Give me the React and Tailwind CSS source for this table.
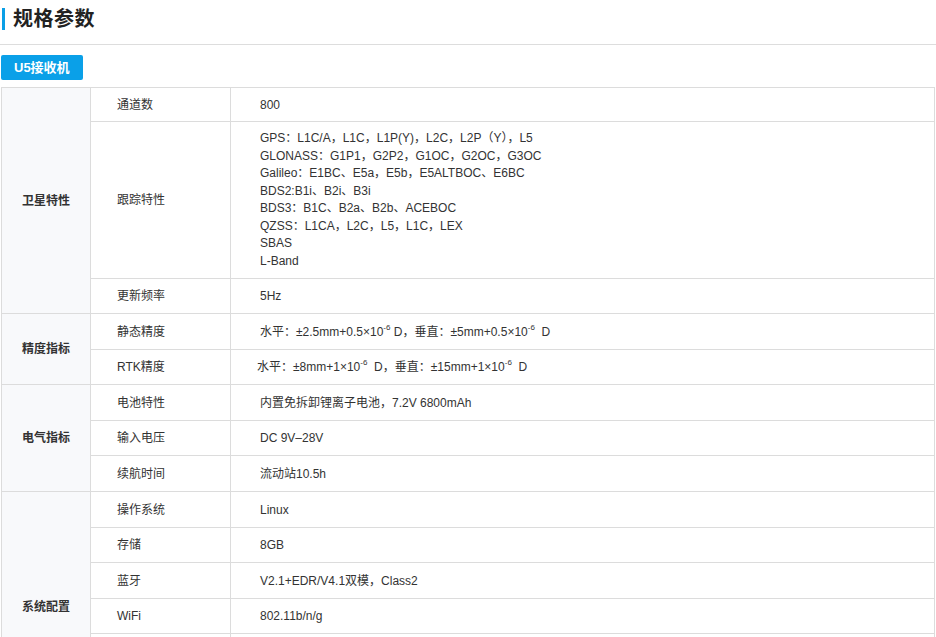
import React from "react";

const font = { fontFamily: '"Liberation Sans", "Noto Sans CJK SC", sans-serif' };

function Sup({ children }) {
  return <sup className="text-[8px] relative -top-[1px] align-super leading-none">{children}</sup>;
}

const td2 = "border border-[#dcdcdc] pl-[26px] pr-2 text-left align-middle";
const td3 = "border border-[#dcdcdc] pl-[29px] pr-2 text-left align-middle";
const tdCat = "border border-[#dcdcdc] bg-[#f8f9fb] text-center align-middle font-bold";

export default function App() {
  const tracking = [
    "GPS：L1C/A，L1C，L1P(Y)，L2C，L2P（Y），L5",
    "GLONASS：G1P1，G2P2，G1OC，G2OC，G3OC",
    "Galileo：E1BC、E5a，E5b，E5ALTBOC、E6BC",
    "BDS2:B1i、B2i、B3i",
    "BDS3：B1C、B2a、B2b、ACEBOC",
    "QZSS：L1CA，L2C，L5，L1C，LEX",
    "SBAS",
    "L-Band",
  ];
  return (
    <div className="w-[936px] h-[637px] bg-white text-[#333] overflow-hidden" style={font}>
      <div className="flex items-center h-[45px] pb-[6px] border-b border-[#dddddd]">
        <div className="w-[3px] h-[22px] bg-[#0a9fe6] ml-[2px] mr-[8px]" />
        <h1 className="text-[20px] font-bold text-[#222] leading-none tracking-[0.5px]">规格参数</h1>
      </div>
      <div className="pt-[10px]">
        <span className="inline-flex items-center h-[25px] px-[13px] ml-px bg-[#0aa0e8] text-white text-[13px] font-bold rounded-[2px]">
          U5接收机
        </span>
      </div>
      <div className="pt-[7px] pl-px">
        <table className="w-[934px] table-fixed border-collapse text-[12px]">
          <colgroup>
            <col className="w-[89px]" />
            <col className="w-[140px]" />
            <col />
          </colgroup>
          <tbody>
            <tr className="h-[34px]">
              <td rowSpan={3} className={tdCat}>卫星特性</td>
              <td className={td2}>通道数</td>
              <td className={td3}>800</td>
            </tr>
            <tr className="h-[157px]">
              <td className={td2}>跟踪特性</td>
              <td className={td3 + " leading-[17.5px]"}>
                {tracking.map((t) => (
                  <div key={t}>{t}</div>
                ))}
              </td>
            </tr>
            <tr className="h-[35px]">
              <td className={td2}>更新频率</td>
              <td className={td3}>5Hz</td>
            </tr>
            <tr className="h-[36px]">
              <td rowSpan={2} className={tdCat}>精度指标</td>
              <td className={td2}>静态精度</td>
              <td className={td3}>
                水平：±2.5mm+0.5×10<Sup>-6</Sup> D，垂直：±5mm+0.5×10<Sup>-6</Sup>&nbsp; D
              </td>
            </tr>
            <tr className="h-[35px]">
              <td className={td2}>RTK精度</td>
              <td className={"border border-[#dcdcdc] pl-[26px] pr-2 text-left align-middle"}>
                水平：±8mm+1×10<Sup>-6</Sup>&nbsp; D，垂直：±15mm+1×10<Sup>-6</Sup>&nbsp; D
              </td>
            </tr>
            <tr className="h-[36px]">
              <td rowSpan={3} className={tdCat}>电气指标</td>
              <td className={td2}>电池特性</td>
              <td className={td3}>内置免拆卸锂离子电池，7.2V 6800mAh</td>
            </tr>
            <tr className="h-[35px]">
              <td className={td2}>输入电压</td>
              <td className={td3}>DC 9V–28V</td>
            </tr>
            <tr className="h-[36px]">
              <td className={td2}>续航时间</td>
              <td className={td3}>流动站10.5h</td>
            </tr>
            <tr className="h-[36px]">
              <td rowSpan={6} className={tdCat}>系统配置</td>
              <td className={td2}>操作系统</td>
              <td className={td3}>Linux</td>
            </tr>
            <tr className="h-[35px]">
              <td className={td2}>存储</td>
              <td className={td3}>8GB</td>
            </tr>
            <tr className="h-[36px]">
              <td className={td2}>蓝牙</td>
              <td className={td3}>V2.1+EDR/V4.1双模，Class2</td>
            </tr>
            <tr className="h-[35px]">
              <td className={td2}>WiFi</td>
              <td className={td3}>802.11b/n/g</td>
            </tr>
            <tr className="h-[53px]">
              <td className={td2}></td>
              <td className={td3}></td>
            </tr>
            <tr className="h-[36px]">
              <td className={td2}></td>
              <td className={td3}></td>
            </tr>
          </tbody>
        </table>
      </div>
    </div>
  );
}
